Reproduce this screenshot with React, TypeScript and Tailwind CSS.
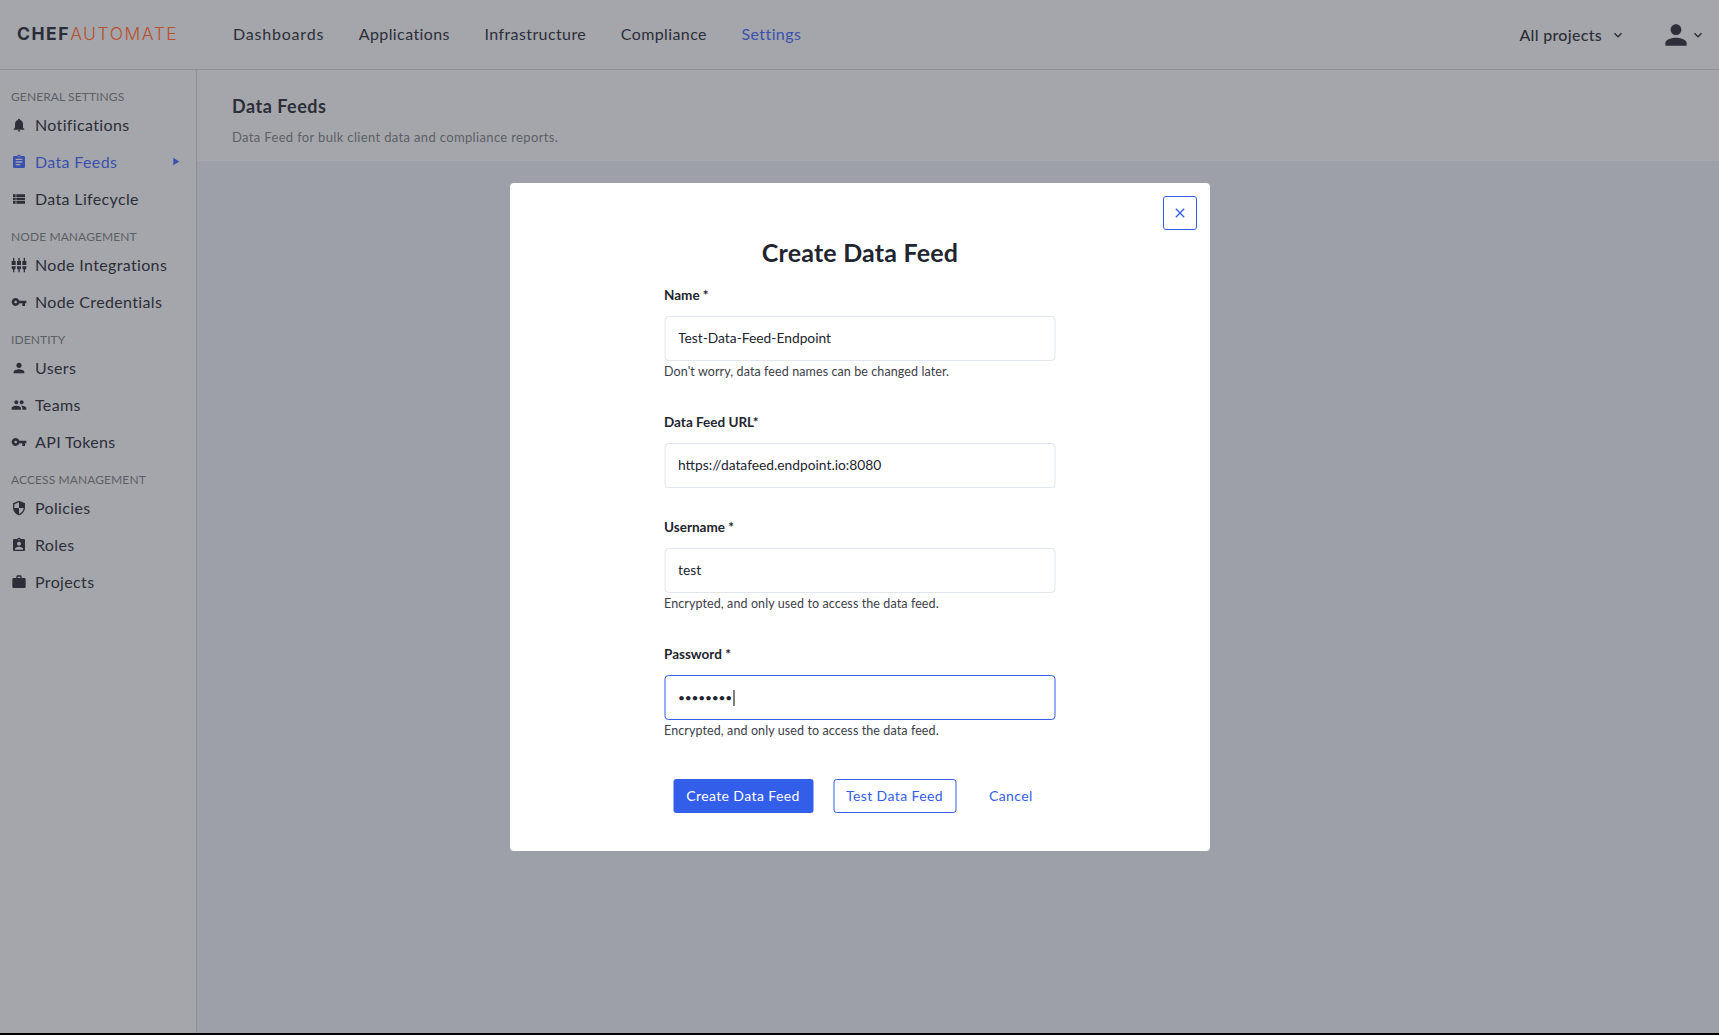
import React from 'react';
import {
  MdNotifications,
  MdAssignment,
  MdViewList,
  MdSettingsInputComponent,
  MdVpnKey,
  MdPerson,
  MdPeople,
  MdSecurity,
  MdAssignmentInd,
  MdWork,
  MdClose,
  MdKeyboardArrowDown,
  MdPlayArrow,
} from 'react-icons/md';

const navLinks = ['Applications', 'Infrastructure', 'Compliance'];

const sideSections = [
  {
    title: 'General Settings',
    items: [
      { label: 'Notifications', icon: MdNotifications },
      { label: 'Data Feeds', icon: MdAssignment, active: true },
      { label: 'Data Lifecycle', icon: MdViewList },
    ],
  },
  {
    title: 'Node Management',
    items: [
      { label: 'Node Integrations', icon: MdSettingsInputComponent },
      { label: 'Node Credentials', icon: MdVpnKey },
    ],
  },
  {
    title: 'Identity',
    items: [
      { label: 'Users', icon: MdPerson },
      { label: 'Teams', icon: MdPeople },
      { label: 'API Tokens', icon: MdVpnKey },
    ],
  },
  {
    title: 'Access Management',
    items: [
      { label: 'Policies', icon: MdSecurity },
      { label: 'Roles', icon: MdAssignmentInd },
      { label: 'Projects', icon: MdWork },
    ],
  },
];

const Field: React.FC<{
  label: string;
  value: string;
  help?: string;
  type?: string;
  focused?: boolean;
  className?: string;
}> = ({ label, value, help, type = 'text', focused, className }) => (
  <div className={className}>
    <label className="block h-[20px] text-[13.5px] leading-[20px] font-bold text-[#22242f]">{label}</label>
    <div className="relative mt-[11px]">
      <input
        readOnly
        type={type}
        value={value}
        className={`block h-[45px] w-full rounded-[4px] border bg-white px-[13px] text-[#22242f] outline-none ${
          focused ? 'border-[#335eea] text-[12px] tracking-[-0.2px]' : 'border-[#e1e6ee] pb-[2px] text-[13.8px]'
        }`}
      />
      {focused && <span className="absolute left-[69px] top-[15px] h-[16px] w-px bg-black" />}
    </div>
    {help && <p className="mt-[2px] h-[18px] text-[12.5px] leading-[18px] tracking-[0.1px] text-[#3c3e49]">{help}</p>}
  </div>
);

export default function App() {
  return (
    <div className="relative h-[1035px] w-full overflow-hidden bg-black font-['Lato',sans-serif] text-[#2c2e39]">
      <div className="flex h-[1033px] flex-col bg-[#9da0a8]">
        <header className="flex h-[70px] shrink-0 items-center border-b border-[#8e9097] bg-[#a5a6ab]">
          <div className="ml-[17px] w-[216px] font-['Inter',sans-serif] text-[17.5px] tracking-[1.55px]">
            <span className="font-bold text-[#2a2c3a]">CHEF</span>
            <span className="font-light text-[#b9502f]">AUTOMATE</span>
          </div>
          <nav className="-mt-[2px] flex gap-[34.6px] text-[16px] tracking-[0.4px]">
            <span className="tracking-[0.8px]">Dashboards</span>
            {navLinks.map((link) => (
              <span key={link}>{link}</span>
            ))}
            <span className="text-[#3a50ad]">Settings</span>
          </nav>
          <div className="ml-auto flex items-center">
            <span className="text-[16px] font-medium tracking-[0.3px]">All projects</span>
            <MdKeyboardArrowDown className="ml-[8px] text-[16px]" />
            <MdPerson className="ml-[34px] text-[32px]" />
            <MdKeyboardArrowDown className="-ml-[2px] mr-[13px] text-[16px]" />
          </div>
        </header>

        <div className="flex min-h-0 flex-1">
          <aside className="w-[197px] shrink-0 border-r border-[#8e9097] bg-[#a5a6ab] pt-[17px]">
            {sideSections.map((section) => (
              <div key={section.title} className="mb-[10px]">
                <div className="h-[19px] pl-[11px] text-[12px] leading-[20px] tracking-[0.1px] text-[#5d5f67] uppercase">
                  {section.title}
                </div>
                {section.items.map((item) => {
                  const Icon = item.icon;
                  return (
                    <div
                      key={item.label}
                      className={`flex h-[37px] items-center pl-[11px] text-[16px] tracking-[0.35px] ${item.active ? 'text-[#3a50ad]' : ''}`}
                    >
                      <Icon className="w-[16px] shrink-0 text-[16px]" />
                      <span className="ml-[8px]">{item.label}</span>
                      {item.active && <MdPlayArrow className="ml-auto mr-[14px] text-[13px]" />}
                    </div>
                  );
                })}
              </div>
            ))}
          </aside>

          <main className="min-w-0 flex-1">
            <div className="h-[91px] bg-[#a5a6ab] pl-[35px] pt-[24px]">
              <h1 className="text-[18px] leading-[24px] font-bold tracking-[0.5px] text-[#2c2e39]">Data Feeds</h1>
              <p className="mt-[10px] text-[13px] leading-[18px] tracking-[0.35px] text-[#5d5f67]">
                Data Feed for bulk client data and compliance reports.
              </p>
            </div>
          </main>
        </div>
      </div>

      {/* Create modal */}
      <div className="absolute left-[510px] top-[183px] h-[668px] w-[700px] rounded-[4px] bg-white">
        <button className="absolute right-[13px] top-[13px] flex h-[34px] w-[34px] items-center justify-center rounded-[3px] border border-[#335eea] text-[16px] text-[#335eea]">
          <MdClose />
        </button>
        <h2 className="pt-[52px] text-center text-[25px] leading-[34px] font-bold tracking-[0.2px] text-[#22242f]">Create Data Feed</h2>
        <div className="mx-auto mt-[16px] w-[391px] -translate-x-[0.5px]">
          <Field label="Name *" value="Test-Data-Feed-Endpoint" help="Don't worry, data feed names can be changed later." />
          <Field className="mt-[31px]" label="Data Feed URL*" value="https://datafeed.endpoint.io:8080" />
          <Field className="mt-[29px]" label="Username *" value="test" help="Encrypted, and only used to access the data feed." />
          <Field className="mt-[31px]" label="Password *" type="password" value="abcdefgh" help="Encrypted, and only used to access the data feed." focused />
          <div className="mt-[39px] flex items-center pl-[9px] text-[14px] tracking-[0.4px]">
            <button className="h-[34px] w-[140px] rounded-[3px] bg-[#335eea] pb-[2px] text-white">Create Data Feed</button>
            <button className="ml-[20px] h-[34px] w-[123px] rounded-[3px] border border-[#335eea] pb-[2px] text-[#335eea]">Test Data Feed</button>
            <button className="ml-[33px] pb-[2px] text-[#335eea]">Cancel</button>
          </div>
        </div>
      </div>
    </div>
  );
}
